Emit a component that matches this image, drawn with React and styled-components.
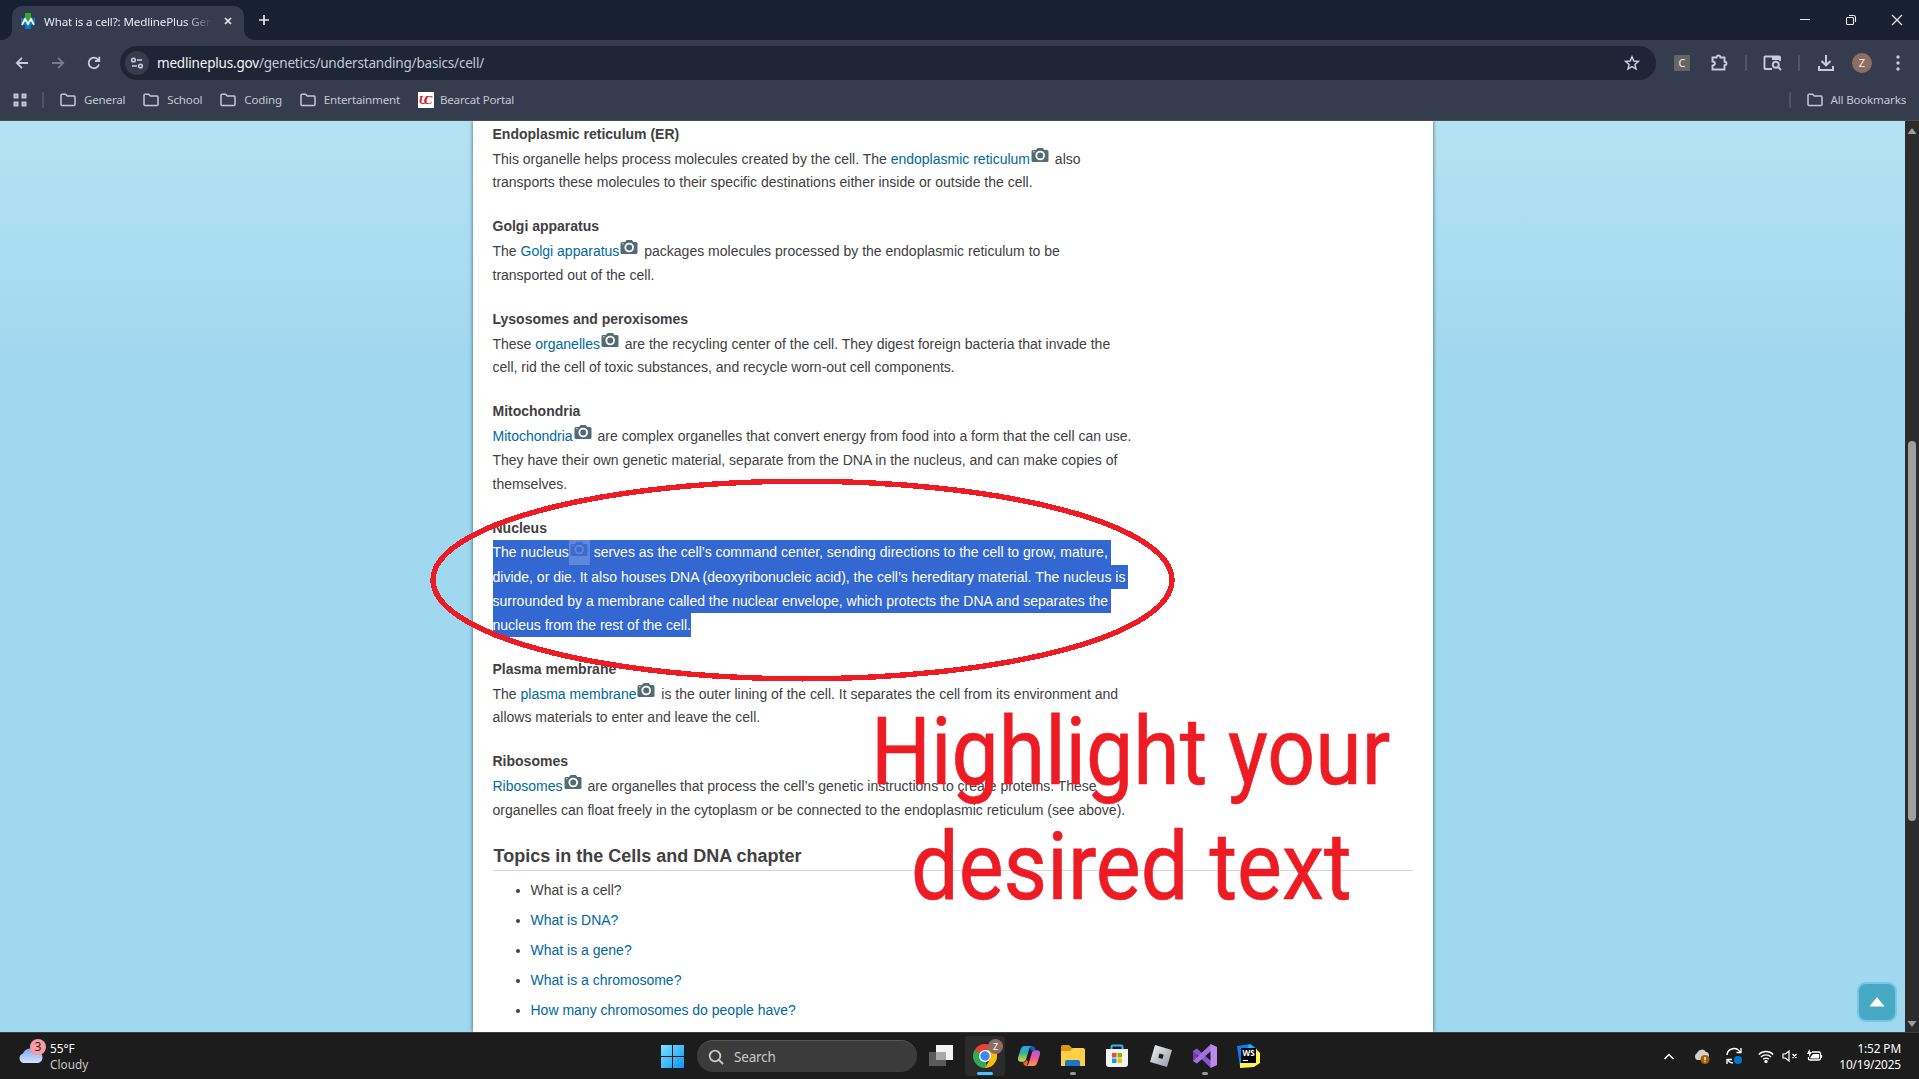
import React from "react";
import styled, { createGlobalStyle } from "styled-components";

const Global = createGlobalStyle`
  *{box-sizing:border-box}
  html,body{margin:0;padding:0;overflow:hidden}
  body{font-family:"Noto Sans","Open Sans",sans-serif}
`;
const Screen = styled.div`
  width:1919px;height:1079px;display:flex;flex-direction:column;position:relative;overflow:hidden;background:#1c1c1c;
  svg{display:block;flex:none}
`;
const TabStrip = styled.header`
  height:40px;flex:none;background:#182131;display:flex;align-items:flex-end;padding-left:12px;color:#e6e9f2;
`;
const Tab = styled.div`
  width:232px;height:34px;background:#343c4d;border-radius:10px 10px 0 0;display:flex;align-items:center;padding:0 10px 4px 8px;gap:8px;position:relative;
  &::before,&::after{content:"";position:absolute;bottom:0;width:10px;height:10px}
  &::before{left:-10px;background:radial-gradient(circle at 0 0,transparent 9.5px,#343c4d 10px)}
  &::after{right:-10px;background:radial-gradient(circle at 100% 0,transparent 9.5px,#343c4d 10px)}
`;
const TabTitle = styled.div`
  width:171px;overflow:hidden;white-space:nowrap;font-size:11.6px;letter-spacing:-0.15px;
  -webkit-mask-image:linear-gradient(90deg,#000 142px,transparent 168px);
`;
const NewTab = styled.div`height:34px;display:flex;align-items:center;padding:0 0 6px 13px;flex:1`;
const WinControls = styled.div`display:flex;height:40px;align-items:center;gap:34px;padding-right:16px`;
const Toolbar = styled.div`
  height:46px;flex:none;background:#343c4d;display:flex;align-items:center;color:#c5cbe0;padding:0 14px;
`;
const NavGroup = styled.div`display:flex;gap:20px;width:106px`;
const UrlBar = styled.div`
  width:1536px;height:34px;border-radius:17px;background:#1e2636;display:flex;align-items:center;padding:0 16px 0 5px;
`;
const SiteChip = styled.div`width:24px;height:24px;border-radius:50%;background:#343c4d;display:grid;place-items:center`;
const Url = styled.div`font-size:13.5px;line-height:18px;color:#c3c8d3;margin:0 0 0 8px;flex:1;letter-spacing:-.19px;b{font-weight:400;color:#f2f4f8}`;
const Actions = styled.div`flex:1;display:flex;align-items:center;padding-left:18px`;
const Divider = styled.i`width:2px;height:16px;background:#4d566b;border-radius:1px`;
const ExtBadge = styled.div`width:16px;height:16px;background:#666;border-radius:1px;color:#eee;font:11px/16px "Noto Sans",sans-serif;text-align:center`;
const Avatar = styled.div`width:20px;height:20px;border-radius:50%;background:#8d6e63;color:#f5f0ee;font-size:11px;line-height:20px;text-align:center`;
const Bookmarks = styled.div`
  height:35px;flex:none;background:#343c4d;display:flex;align-items:center;color:#c3c8d3;font-size:11.6px;padding:0 13px 6px 12px;border-bottom:1px solid #4a4c50;
`;
const BmList = styled.div`display:flex;gap:18px;flex:1;margin-left:16px`;
const Bm = styled.div`display:flex;align-items:center;gap:8px;white-space:nowrap;letter-spacing:-0.2px;span{margin-top:-2px}`;
const UcLogo = styled.div`width:16px;height:16px;margin-right:-2px;background:#fff;color:#d01c2e;font:italic 700 13px/16px "Liberation Serif",serif;letter-spacing:-4px;padding-right:5px;text-align:center`;

const Page = styled.main`
  height:911px;flex:none;display:flex;background:linear-gradient(#b5e2f3,#a0d8ef 240px,#a0d8ef);overflow:hidden;
`;
const PageArea = styled.div`flex:1;display:flex;padding-left:473px`;
const Sheet = styled.article`
  width:960px;height:911px;background:#fff;box-shadow:0 0 4px rgba(20,60,80,.75);padding:1px 20px 0 19.5px;
  font-family:"Liberation Sans",Arial,sans-serif;font-size:14px;line-height:24px;color:#414042;overflow:hidden;
`;
const Section = styled.section`width:660px;margin-bottom:20px`;
const Term = styled.h3`font-size:14px;line-height:24px;margin:0 0 1px;height:24px`;
const Copy = styled.div`white-space:nowrap`;
const Line = styled.div`height:${p => p.$tight ? 23 : 24}px;line-height:24px`;
const Mark = styled.span`
  display:inline-block;height:${p => p.$first ? 25 : 24}px;margin-top:${p => p.$first ? -1 : 0}px;line-height:${p => p.$first ? 25 : 24}px;
  vertical-align:top;padding-right:${p => p.$pr || 0}px;background:#3367d1;color:#fff;
`;
const Link = styled.a`color:#0068a0`;
const CamBox = styled.span`
  display:inline-block;vertical-align:top;height:${p => p.$sel ? 25 : 24}px;width:21px;padding:${p => p.$sel ? 2 : 1}px 0 0 1px;background:${p => p.$sel ? "#5d88dc" : "transparent"};
`;
const TopicsHead = styled.h2`font-size:18px;line-height:24px;margin:22px 0 0;padding:0 0 2px 1px;height:27px;border-bottom:1px solid #d7d7d7`;
const Topics = styled.ul`margin:4px 0 0;padding:0 0 0 38px;li{height:30px;line-height:30px}`;
const Scroll = styled.div`width:14px;background:#2c2c2c;display:flex;flex-direction:column;align-items:center;padding:6px 0 4px`;
const Thumb = styled.div`width:8px;height:380px;border-radius:4px;background:#9f9f9f;margin:306px 0 auto`;

const ToTop = styled.button`
  position:absolute;left:1857px;top:982px;width:40px;height:40px;border:2px solid #78c6e6;border-radius:9px;background:#48a9c5;padding:0;display:grid;place-items:center;
`;
const Ring = styled.svg`position:absolute;left:428px;top:476px`;
const Note = styled.div`
  position:absolute;left:${p => p.$x}px;top:${p => p.$y}px;font:400 95px/112px Roboto,sans-serif;color:#ed1c24;white-space:nowrap;
  -webkit-text-stroke:.7px #ed1c24;transform-origin:0 0;transform:scaleX(${p => p.$s});
`;

const Taskbar = styled.footer`
  height:47px;flex:none;background:#1c1c1c;border-top:1px solid #3c3c3c;display:flex;align-items:center;color:#fff;font-size:11.8px;
`;
const Weather = styled.div`width:656px;display:flex;align-items:center;padding-left:17px;gap:7px;line-height:16px;span{color:#c8c8c8}`;
const WeatherIcon = styled.div`position:relative;width:26px;height:30px`;
const Count = styled.b`position:absolute;left:13px;top:-2px;width:16px;height:16px;border-radius:50%;background:#ff99a4;color:#222;font:12px/16px "Noto Sans",sans-serif;text-align:center`;
const Apps = styled.div`display:flex;align-items:center;height:46px;flex:1`;
const SearchBox = styled.div`width:220px;height:32px;margin:0 4px 0 13px;border-radius:16px;background:#3b3b3b;border-top:1px solid #555;display:flex;align-items:center;gap:10px;padding-left:11px;font-size:13.5px;letter-spacing:-.2px;color:#c9c9c9`;
const AppSlot = styled.div`
  width:40px;height:40px;margin-right:4px;border-radius:4px;display:grid;place-items:center;position:relative;background:${p => p.$active ? "#2b2b2b" : "transparent"};
  &::after{content:"";position:absolute;bottom:1px;left:50%;transform:translateX(-50%);height:3px;border-radius:2px;width:${p => p.$active ? 16 : p.$open ? 6 : 0}px;background:${p => p.$active ? "#4cc2ff" : "#9a9a9a"}}
`;
const MiniAvatar = styled.span`position:absolute;right:2px;top:3px;width:15px;height:15px;border-radius:50%;background:#8d6e63;font-size:9px;line-height:15px;text-align:center`;
const Tray = styled.div`display:flex;align-items:center`;
const Gap = styled.i`width:${p => p.$w}px;flex:none`;
const Clock = styled.div`width:96px;line-height:16px;padding-right:18px;letter-spacing:-.1px;white-space:nowrap;display:flex;flex-direction:column;align-items:flex-end`;

const S = ({ w = 16, h = w, vb, children, sw = 1.8 }) => (
  <svg width={w} height={h} viewBox={vb || `0 0 ${w} ${h}`} fill="none" stroke="currentColor" strokeWidth={sw}>{children}</svg>
);
const Folder = () => <S w={16} h={14} sw={1.5}><path d="M1 11.5V2.2q0-1 1-1h3.6l1.7 1.9H14q1 0 1 1v7.4q0 1-1 1H2q-1 0-1-1z" /></S>;
const Camera = ({ sel }) => (
  <CamBox $sel={sel}>
    <svg width="19" height="16" viewBox="0 0 19 16">
      <path fill={sel ? "#3c6bc9" : "#536c74"} d="M2 2h3l1.600-2h5.200L13.400 2H16q1.500 0 1.500 1.500v9q0 1.500-1.500 1.500H2Q.5 14 .5 12.500v-9Q.5 2 2 2z" />
      <circle cx="9.200" cy="7.500" r="3.900" fill="none" stroke={sel ? "#5d88dc" : "#fff"} strokeWidth="1.800" />
      <circle cx="2.800" cy="3.800" r=".8" fill={sel ? "#5d88dc" : "#dfe5e7"} />
    </svg>
  </CamBox>
);

export default function App() {
  return (
    <Screen>
      <Global />
      <TabStrip>
        <Tab>
          <svg width="16" height="18" viewBox="0 0 16 18"><path fill="#0b7ccb" d="M1 6h14v7h-4v4H5v-4H1z" /><path fill="#39a935" d="M5 1h6v5L8 11 5 6z" /><path fill="none" stroke="#fff" strokeWidth="1.700" d="M2 13l3-6 3 5 3-5 3 6" /></svg>
          <TabTitle>What is a cell?: MedlinePlus Genetics</TabTitle>
          <S w={10} sw={1.7}><path d="M2 2l6 6M8 2l-6 6" /></S>
        </Tab>
        <NewTab><S w={14} sw={1.7}><path d="M7 2v10M2 7h10" /></S></NewTab>
        <WinControls>
          <S w={12} sw={1}><path d="M1 5.500h10" /></S>
          <S w={12} sw={1.100}><rect x="1.500" y="3.500" width="7" height="7" rx="1" /><path d="M4 1.500h4.500q2 0 2 2V8" /></S>
          <S w={12} sw={1.200}><path d="M1 1l10 10M11 1L1 11" /></S>
        </WinControls>
      </TabStrip>
      <Toolbar>
        <NavGroup>
          <S w={16}><path d="M14 8H3M8 2.800L2.800 8 8 13.200" /></S>
          <S w={16}><g opacity=".45"><path d="M2 8h11M8 2.800L13.200 8 8 13.200" /></g></S>
          <S w={16}><path d="M13 9.500A5.300 5.300 0 1 1 12 4.500L13 6M13.300 1.800V6H9" /></S>
        </NavGroup>
        <UrlBar>
          <SiteChip><S w={14} sw={1.600}><circle cx="3.500" cy="4" r="1.800" /><path d="M7 4h5M2 10h5" /><circle cx="10.500" cy="10" r="1.800" /></S></SiteChip>
          <Url><b>medlineplus.gov</b>/genetics/understanding/basics/cell/</Url>
          <S w={16} sw={1.500}><path d="M8 1.800l1.800 4.200 4.600.4-3.500 3 1.100 4.500L8 11.500l-4 2.400 1.100-4.500-3.500-3 4.600-.4z" /></S>
        </UrlBar>
        <Actions>
          <ExtBadge>C</ExtBadge><Gap $w={20} />
          <S w={18} sw={1.900}><path d="M2.500 3.500h4q.3-2 2-2t2 2h4v4.200q2 .2 2 1.800t-2 1.800v4.200h-12v-4q2.400-.2 2.400-2t-2.400-2z" /></S><Gap $w={17} />
          <Divider /><Gap $w={16} />
          <S w={19} h={16} sw={1.900}><path d="M9 14H2.500q-1 0-1-1V2.500q0-1 1-1H16q1 0 1 1V6" /><path d="M9 3h8" strokeWidth="4" /><circle cx="12.800" cy="9.800" r="3" /><path d="M15 12l3 3" /></S><Gap $w={16} />
          <Divider /><Gap $w={17} />
          <S w={18} sw={2}><path d="M9 1v10M4.500 7L9 11.300 13.500 7M2 12v4h14v-4" /></S><Gap $w={17} />
          <Avatar>Z</Avatar><Gap $w={24} />
          <svg width="4" height="16" fill="#c5cbe0"><circle cx="2" cy="2" r="1.700" /><circle cx="2" cy="8" r="1.700" /><circle cx="2" cy="14" r="1.700" /></svg>
        </Actions>
      </Toolbar>
      <Bookmarks>
        <S w={16} sw={2}><path d="M2.500 2.500h3v3h-3zM10.500 2.500h3v3h-3zM2.500 10.500h3v3h-3zM10.500 10.500h3v3h-3z" /></S>
        <Gap $w={14} /><Divider />
        <BmList>
          {["General", "School", "Coding", "Entertainment"].map(t => <Bm key={t}><Folder /><span>{t}</span></Bm>)}
          <Bm><UcLogo>UC</UcLogo><span>Bearcat Portal</span></Bm>
        </BmList>
        <Divider /><Gap $w={16} />
        <Bm><Folder /><span>All Bookmarks</span></Bm>
      </Bookmarks>
      <Page>
        <PageArea>
          <Sheet>
            <Section>
              <Term>Endoplasmic reticulum (ER)</Term>
              <Copy><Line $tight>This organelle helps process molecules created by the cell. The <Link>endoplasmic reticulum</Link><Camera /> also</Line>
                <Line>transports these molecules to their specific destinations either inside or outside the cell.</Line></Copy>
            </Section>
            <Section>
              <Term>Golgi apparatus</Term>
              <Copy><Line>The <Link>Golgi apparatus</Link><Camera /> packages molecules processed by the endoplasmic reticulum to be</Line>
                <Line>transported out of the cell.</Line></Copy>
            </Section>
            <Section>
              <Term>Lysosomes and peroxisomes</Term>
              <Copy><Line $tight>These <Link>organelles</Link><Camera /> are the recycling center of the cell. They digest foreign bacteria that invade the</Line>
                <Line>cell, rid the cell of toxic substances, and recycle worn-out cell components.</Line></Copy>
            </Section>
            <Section>
              <Term>Mitochondria</Term>
              <Copy><Line><Link>Mitochondria</Link><Camera /> are complex organelles that convert energy from food into a form that the cell can use.</Line>
                <Line>They have their own genetic material, separate from the DNA in the nucleus, and can make copies of</Line>
                <Line>themselves.</Line></Copy>
            </Section>
            <Section>
              <Term>Nucleus</Term>
              <Copy><Line><Mark $first $pr={3}>The nucleus<Camera sel /> serves as the cell’s command center, sending directions to the cell to grow, mature,</Mark></Line>
                <Line><Mark $pr={3}>divide, or die. It also houses DNA (deoxyribonucleic acid), the cell’s hereditary material. The nucleus is</Mark></Line>
                <Line><Mark $pr={3}>surrounded by a membrane called the nuclear envelope, which protects the DNA and separates the</Mark></Line>
                <Line><Mark>nucleus from the rest of the cell.</Mark></Line></Copy>
            </Section>
            <Section>
              <Term>Plasma membrane</Term>
              <Copy><Line $tight>The <Link>plasma membrane</Link><Camera /> is the outer lining of the cell. It separates the cell from its environment and</Line>
                <Line>allows materials to enter and leave the cell.</Line></Copy>
            </Section>
            <Section>
              <Term>Ribosomes</Term>
              <Copy><Line><Link>Ribosomes</Link><Camera /> are organelles that process the cell’s genetic instructions to create proteins. These</Line>
                <Line>organelles can float freely in the cytoplasm or be connected to the endoplasmic reticulum (see above).</Line></Copy>
            </Section>
            <TopicsHead>Topics in the Cells and DNA chapter</TopicsHead>
            <Topics>
              <li>What is a cell?</li>
              {["What is DNA?", "What is a gene?", "What is a chromosome?", "How many chromosomes do people have?"].map(t => <li key={t}><Link>{t}</Link></li>)}
            </Topics>
          </Sheet>
        </PageArea>
        <Scroll>
          <svg width="10" height="8"><path d="M5 1l4.500 6h-9z" fill="#9f9f9f" /></svg>
          <Thumb />
          <svg width="10" height="8"><path d="M5 7L.5 1h9z" fill="#9f9f9f" /></svg>
        </Scroll>
      </Page>
      <Taskbar>
        <Weather>
          <WeatherIcon>
            <svg width="26" height="30"><defs><linearGradient id="cl" x2="0" y2="1"><stop stopColor="#7fa7ee" /><stop offset="1" stopColor="#d5e3fb" /></linearGradient></defs><path d="M6 22a5 5 0 0 1 0-9.500A8 8 0 0 1 20 11a5.500 5.500 0 0 1 0 11z" fill="url(#cl)" /></svg>
            <Count>3</Count>
          </WeatherIcon>
          <div>55°F<br /><span>Cloudy</span></div>
        </Weather>
        <Apps>
          <Gap $w={5} />
          <svg width="23" height="23"><defs><linearGradient id="wn" x2="1" y2="1"><stop stopColor="#7fe0ff" /><stop offset="1" stopColor="#0a95f5" /></linearGradient></defs><path fill="url(#wn)" d="M0 0h11v11H0zM12 0h11v11H12zM0 12h11v11H0zM12 12h11v11H12z" /></svg>
          <SearchBox><S w={16} sw={1.800}><circle cx="7" cy="7" r="5.300" /><path d="M11 11l4 4" /></S>Search</SearchBox>
          <AppSlot><svg width="24" height="24"><path fill="#5a5a5a" d="M0 8h17v14H0z" /><path fill="#f2f2f2" d="M7 1h17v15H7z" /><path fill="#a8a8a8" d="M7 8h10v8H7z" /></svg></AppSlot>
          <AppSlot $active>
            <svg width="24" height="24" viewBox="0 0 24 24"><path fill="#ea4335" d="M12 12L1.600 6a12 12 0 0 1 20.800 0z" /><path fill="#34a853" d="M12 12l2 11.800A12 12 0 0 1 1.600 6z" /><path fill="#fbbc04" d="M12 6h10.400A12 12 0 0 1 12 24l5.200-9z" /><circle cx="12" cy="12" r="6" fill="#fff" /><circle cx="12" cy="12" r="4.700" fill="#4285f4" /></svg>
            <MiniAvatar>Z</MiniAvatar>
          </AppSlot>
          <AppSlot><svg width="24" height="24" viewBox="0 0 24 24"><defs><linearGradient id="ca" x2="0" y2="1"><stop stopColor="#2f9df3" /><stop offset=".45" stopColor="#2fb59b" /><stop offset="1" stopColor="#f2d230" /></linearGradient><linearGradient id="cb" x2="0" y2="1"><stop stopColor="#a55ae0" /><stop offset=".5" stopColor="#ee5896" /><stop offset="1" stopColor="#ff9a45" /></linearGradient></defs><path fill="#1b55c8" d="M12 2h3.500q1.800 0 2.400 2l.8 2.500H14z" /><path fill="url(#ca)" d="M7.500 2h7q-1.600.4-2.200 2.500L9 15.500q-.7 2.200-2.700 2.200H4Q0 17.700 1.200 13L3.800 5q1-3 3.700-3z" /><path fill="#f0623a" d="M6 18.500q2.700 0 3.600-2.500L11 17l-1 5H9q-2 0-3-3.500z" /><path fill="url(#cb)" d="M16.500 22h-7q1.600-.4 2.200-2.500L15 8.500q.7-2.200 2.700-2.200H20q4 0 2.800 4.700L20.200 19q-1 3-3.700 3z" /></svg></AppSlot>
          <AppSlot $open><svg width="24" height="24"><path fill="#d99a10" d="M0 3q0-2 2-2h6l3 3h11v6H0z" /><path fill="#ffcf48" d="M0 7h9l3-3h10q2 0 2 2v16H0z" /><path fill="#1976c9" d="M4 22v-4q0-2 2-2h11q2 0 2 2v4z" /></svg></AppSlot>
          <AppSlot><svg width="24" height="24"><path fill="none" stroke="#2fb8f0" strokeWidth="2" d="M6.500 6V3q0-1.500 1.500-1.500h8q1.500 0 1.500 1.500v3" /><path fill="#f3f3f3" d="M1 5h22v15q0 3-3 3H4q-3 0-3-3z" /><path fill="#f25022" d="M7 9h4.500v4.500H7z" /><path fill="#7fba00" d="M12.500 9H17v4.500h-4.500z" /><path fill="#00a4ef" d="M7 14.500h4.500V19H7z" /><path fill="#ffb900" d="M12.500 14.500H17V19h-4.500z" /></svg></AppSlot>
          <AppSlot><svg width="24" height="24"><defs><linearGradient id="rb" x2="1" y2="1"><stop stopColor="#f4f6f8" /><stop offset="1" stopColor="#8d96a0" /></linearGradient></defs><path fill="url(#rb)" fillRule="evenodd" d="M6 1l17 5-5 17L1 18zM10.500 9.500l-1.200 4.200 4.200 1.200 1.200-4.200z" /></svg></AppSlot>
          <AppSlot $open><svg width="24" height="24"><path fill="#6b3fa8" d="M0 7l4-2.500V19.500L0 17z" /><path fill="#8657c9" d="M0 7l4-2.500L18 17v7z" /><path fill="#a273e0" d="M0 17l4 2.500L18 7V0z" /><path fill="#b98af0" d="M17.500 0L24 3v18l-6.500 3z" /></svg></AppSlot>
          <AppSlot><svg width="24" height="24"><path fill="#087cfa" d="M0 2l14-2 6 5v16l-17 2z" /><path fill="#07c3f2" d="M12 0l8 6-2 5-8-5z" /><path fill="#fcf84a" d="M19 5l4 4v10l-6 4-14 1v-5l15-3z" /><path fill="#000" d="M4 4h15v15H4z" /><text x="5.500" y="12" fill="#fff" fontSize="8" fontWeight="700" fontFamily="Noto Sans">WS</text><path fill="#fff" d="M6 16h5v1H6z" /></svg></AppSlot>
        </Apps>
        <Tray>
          <S w={12} sw={1.500}><path d="M1.500 9L6 4.500 10.500 9" /></S><Gap $w={18} />
          <svg width="17" height="17"><path fill="#cfcfcf" d="M4 12a4 4 0 0 1 0-7 5 5 0 0 1 9-1q3 0 3 4v4z" /><circle cx="12" cy="11.500" r="4.500" fill="#a85f00" /><path stroke="#fff" strokeWidth="1.300" d="M12 9v3.300M12 13.300v1" /></svg><Gap $w={15} />
          <S w={18} sw={1.400}><path d="M2 8A7 7 0 0 1 15 5M16 1v4.500h-4.500M2 17v-4.500h5M3 13.500q2 2.500 5 2.500" /><circle cx="13" cy="13" r="4" fill="#0078d4" stroke="none" /></S><Gap $w={15} />
          <S w={16} sw={1.400}><path d="M.8 6.500a10.200 10.200 0 0 1 14.400 0M3 9a7 7 0 0 1 10 0M5.200 11.300a4 4 0 0 1 5.600 0" /><circle cx="8" cy="13.500" r="1" fill="#fff" /></S><Gap $w={8} />
          <S w={16} sw={1.200}><path d="M1 6h2.500L7 3v10L3.500 10H1zM10.500 6l4 4M14.500 6l-4 4" /></S><Gap $w={8} />
          <S w={17} h={16} sw={1.300}><path d="M6 4h7q1.500 0 1.500 1.500v5q0 1.500-1.500 1.500H4q-1.500 0-1.500-1.500V9M15.500 7v3" /><path d="M7 6h6v4.500H4.500V9zM3.500 1L1 6h2v3l3-5H4z" fill="#fff" stroke="none" /></S>
        </Tray>
        <Clock><div>1:52 PM</div><div>10/19/2025</div></Clock>
      </Taskbar>
      <ToTop><svg width="16" height="10"><path d="M8 0l7.500 9.500H.5z" fill="#fff" /></svg></ToTop>
      <Ring width="750" height="208"><ellipse cx="374.500" cy="104" rx="369.500" ry="98.800" fill="none" stroke="#ed1c24" strokeWidth="5.400" shapeRendering="crispEdges" /></Ring>
      <Note $x={870.5} $y={696} $s={0.886}>Highlight your</Note>
      <Note $x={911} $y={811} $s={0.891}>desired text</Note>
    </Screen>
  );
}
